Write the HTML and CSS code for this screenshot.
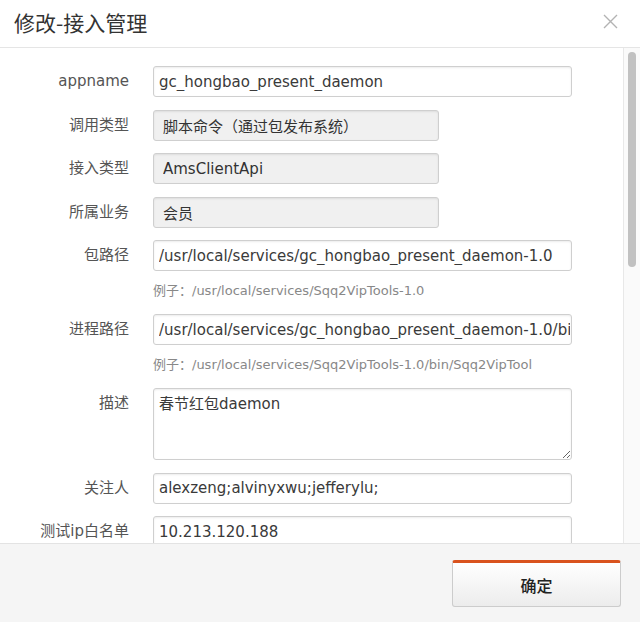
FILE: index.html
```html
<!DOCTYPE html>
<html lang="zh-CN">
<head>
<meta charset="utf-8">
<title>修改-接入管理</title>
<link rel="stylesheet" href="styles.css">
</head>
<body>
<div class="modal">
  <div class="modal-header">
    <h3 class="modal-title">修改-接入管理</h3>
    <button class="close" type="button" aria-label="关闭">
      <svg width="15" height="15" viewBox="0 0 15 15"><path d="M1 1 L14 14 M14 1 L1 14" stroke="#b3b3b3" stroke-width="1.4" fill="none"/></svg>
    </button>
  </div>
  <div class="modal-body">
    <div class="content">
      <form class="form">
        <div class="row">
          <label class="label">appname</label>
          <div class="field"><input class="input" type="text" value="gc_hongbao_present_daemon"></div>
        </div>
        <div class="row">
          <label class="label">调用类型</label>
          <div class="field"><input class="input short" type="text" value="脚本命令（通过包发布系统）" disabled></div>
        </div>
        <div class="row">
          <label class="label">接入类型</label>
          <div class="field"><input class="input short" type="text" value="AmsClientApi" disabled></div>
        </div>
        <div class="row">
          <label class="label">所属业务</label>
          <div class="field"><input class="input short" type="text" value="会员" disabled></div>
        </div>
        <div class="row">
          <label class="label">包路径</label>
          <div class="field">
            <input class="input" type="text" value="/usr/local/services/gc_hongbao_present_daemon-1.0">
            <p class="help">例子：/usr/local/services/Sqq2VipTools-1.0</p>
          </div>
        </div>
        <div class="row">
          <label class="label">进程路径</label>
          <div class="field">
            <input class="input" type="text" value="/usr/local/services/gc_hongbao_present_daemon-1.0/bin/gc_hongbao_present_daemon">
            <p class="help">例子：/usr/local/services/Sqq2VipTools-1.0/bin/Sqq2VipTool</p>
          </div>
        </div>
        <div class="row">
          <label class="label">描述</label>
          <div class="field"><textarea class="input area">春节红包daemon</textarea></div>
        </div>
        <div class="row">
          <label class="label">关注人</label>
          <div class="field"><input class="input" type="text" value="alexzeng;alvinyxwu;jefferylu;"></div>
        </div>
        <div class="row">
          <label class="label">测试ip白名单</label>
          <div class="field"><input class="input" type="text" value="10.213.120.188"></div>
        </div>
      </form>
    </div>
    <div class="scrollbar" aria-hidden="true">
      <div class="thumb"></div>
    </div>
  </div>
  <div class="modal-footer">
    <button class="btn-primary" type="button">确定</button>
  </div>
</div>
</body>
</html>
```
FILE: styles.css
```css
html, body {
  margin: 0;
  padding: 0;
  background: #ffffff;
}
body {
  font-family: "DejaVu Sans", "Noto Sans CJK SC", sans-serif;
  color: #333;
}
.modal {
  display: flex;
  flex-direction: column;
  height: 622px;
  width: 640px;
  background: #fff;
}
.modal-header {
  height: 48px;
  flex: none;
  display: flex;
  align-items: center;
  justify-content: space-between;
  padding: 0 22px 4px 14px;
  box-sizing: border-box;
  border-bottom: 1px solid #e5e5e5;
}
.modal-title {
  margin: 0;
  font-family: "Noto Sans CJK SC", sans-serif;
  font-size: 21px;
  font-weight: 400;
  color: #333;
}
.close {
  border: 0;
  background: none;
  padding: 0;
  width: 15px;
  height: 15px;
  display: block;
  cursor: pointer;
}
.close svg { display: block; }
.modal-body {
  flex: 1;
  min-height: 0;
  display: flex;
}
.content {
  flex: 1;
  overflow: hidden;
}
.scrollbar {
  flex: none;
  width: 17px;
  box-sizing: border-box;
  border-left: 1px solid #e8e8e8;
  background: #fafafa;
  padding: 4px 4px 0 4px;
}
.thumb {
  width: 8px;
  height: 215px;
  border-radius: 4px;
  background: #c1c1c1;
}
.form {
  padding-top: 18px;
}
.row {
  display: flex;
  align-items: flex-start;
  margin-bottom: 12.5px;
}
.label {
  width: 129px;
  flex: none;
  text-align: right;
  margin-right: 24px;
  font-size: 15px;
  line-height: 31px;
  color: #555;
  white-space: nowrap;
}
.field {
  flex: none;
  width: 419px;
}
.input {
  display: block;
  box-sizing: border-box;
  width: 419px;
  height: 31px;
  margin: 0;
  padding: 0 1px 0 5px;
  border: 1px solid #cfcfcf;
  border-radius: 3px;
  box-shadow: inset 0 1px 2px rgba(0,0,0,0.08);
  background: #fff;
  font-family: "DejaVu Sans", "Noto Sans CJK SC", sans-serif;
  font-size: 15px;
  color: #3a3a3a;
  outline: none;
}
.input.short {
  width: 286px;
  padding-left: 9px;
}
.input:disabled {
  background: #f0f0f0;
  color: #333;
  -webkit-text-fill-color: #333;
  opacity: 1;
}
.area {
  height: 72px;
  padding: 5px 5px;
  line-height: 20px;
  resize: vertical;
}
.help {
  margin: 10px 0 0;
  font-size: 13px;
  line-height: 20.5px;
  color: #888;
  white-space: nowrap;
}
.modal-footer {
  height: 79px;
  flex: none;
  box-sizing: border-box;
  border-top: 1px solid #e3e3e3;
  background: #f5f5f5;
  display: flex;
  justify-content: flex-end;
  align-items: flex-start;
  padding: 16px 19px 0 0;
}
.btn-primary {
  width: 169px;
  height: 47px;
  box-sizing: border-box;
  border: 1px solid #cccccc;
  border-top: 3px solid #d9531e;
  border-radius: 3px;
  background: linear-gradient(#ffffff, #ececec);
  font-family: "Noto Sans CJK SC", sans-serif;
  font-size: 16px;
  font-weight: 500;
  color: #222;
  cursor: pointer;
}
```
